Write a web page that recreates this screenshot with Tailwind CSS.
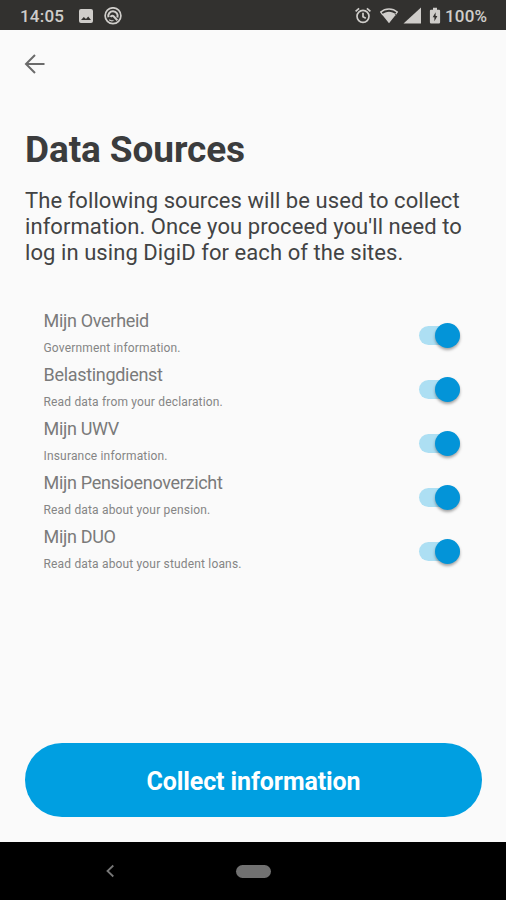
<!DOCTYPE html>
<html lang="en">
<head>
<meta charset="utf-8">
<title>Data Sources</title>
<script src="https://cdn.jsdelivr.net/npm/@tailwindcss/browser@4"></script>
</head>
<body class="bg-[#fafafa] font-[Roboto,sans-serif]">
<div class="flex h-[900px] w-[506px] flex-col overflow-hidden">
  <header class="flex h-[30px] shrink-0 items-center bg-[#32312f] pt-px pr-[18px] pl-[20px] text-[#cfcdca]">
    <span class="w-[58px] text-[17px] leading-[30px] font-medium tracking-[0.2px]">14:05</span>
    <svg class="h-[16px] w-[16px]" viewBox="0 0 16 16"><path fill="currentColor" fill-rule="evenodd" d="M3 1h10a2 2 0 0 1 2 2v10a2 2 0 0 1-2 2H3a2 2 0 0 1-2-2V3a2 2 0 0 1 2-2zM3 12h10l-2.800-3.400-2.200 2.400-2.200-2z"/></svg>
    <svg class="ml-[10px] h-[18px] w-[18px]" viewBox="0 0 18 18" fill="none" stroke="currentColor"><circle cx="9" cy="8.700" r="7.900" stroke-width="1.700"/><path stroke-width="2.100" d="M4.500 10.300A4.700 4.700 0 1 1 13.400 10.500"/><path stroke-width="2" d="M6.600 10c.8-1.600 2.300-1.500 3.200-.5l3.600 3.900"/><path stroke-width="1.300" d="M5.200 12.800c1.200 1 2.800 1.200 4.300.7"/></svg>
    <div class="ml-auto flex items-center">
      <svg class="h-[18px] w-[18px]" viewBox="0 0 18 18" fill="none" stroke="currentColor" stroke-width="1.700"><circle cx="9" cy="9.300" r="6"/><path d="M9 5.800v3.900l2.800 1.500M1.600 4.300l3.500-3M16.400 4.300l-3.500-3"/></svg>
      <svg class="ml-[7px] h-[18px] w-[20px]" viewBox="0 0 20 18"><path fill="none" stroke="currentColor" stroke-width="1.500" d="M1.500 5.200C6.500.9 13.500.9 18.500 5.200"/><path fill="currentColor" d="M3 7.400C7.200 4 12.800 4 17 7.400L10 16.300zM1 5l1.100-.8 2.100 3.200-1 .9zM19 5l-1.100-.8-2.100 3.200 1 .9z"/></svg>
      <svg class="ml-[4px] h-[18px] w-[19px]" viewBox="0 0 19 18"><path fill="currentColor" d="M18 .5v16H.5z"/></svg>
      <svg class="ml-[7px] h-[18px] w-[12px]" viewBox="0 0 12 18"><path fill="currentColor" fill-rule="evenodd" d="M4 .8h4v1.900h2a1.100 1.100 0 0 1 1.100 1.100v11.400A1.300 1.300 0 0 1 9.800 16.500H2.200A1.300 1.300 0 0 1 .9 15.200V3.800A1.100 1.100 0 0 1 2 2.700h2zM6.600 5.200L3.700 10.200h1.700v4l3-5.200H6.600z"/></svg>
      <span class="ml-[4px] w-[43px] text-[17px] leading-[30px] font-medium tracking-[0.200px] whitespace-nowrap">100%</span>
    </div>
  </header>
  <main class="flex grow flex-col px-[25px]">
    <svg class="-ml-[1px] mt-[24px] h-[20px] w-[21px]" viewBox="0 0 21 20" fill="none" stroke="#6b6b6b" stroke-width="2"><path d="M20.500 10H2M11 1L2 10l9 9"/></svg>
    <h1 class="mt-[55px] text-[37px] leading-[42px] font-bold tracking-[-0.100px] text-[#3b3c3d]">Data Sources</h1>
    <p class="mt-[17px] text-[22px] leading-[26px] tracking-[0.070px] whitespace-nowrap text-[#424344]">The following sources will be used to collect<br>information. Once you proceed you'll need to<br>log in using DigiD for each of the sites.</p>
    <ul class="mt-[43px] flex flex-col pr-[21px] pl-[18.500px] text-[#7a7a7a]">
      <li class="flex h-[54.100px] justify-between"><div><h2 class="text-[18px] leading-[24px] tracking-[-0.310px]">Mijn Overheid</h2><p class="mt-[8px] text-[12px] leading-[15px] tracking-[0.170px] text-[#858585]">Government information.</p></div><div class="relative mt-[16.500px] h-[19px] w-[41px] rounded-full bg-[#addff3]"><span class="absolute -top-[3px] right-0 h-[25px] w-[25px] rounded-full bg-[#0394d8] shadow-[0_2px_3px_rgba(0,0,0,0.35)]"></span></div></li>
      <li class="flex h-[54.100px] justify-between"><div><h2 class="text-[18px] leading-[24px] tracking-[-0.310px]">Belastingdienst</h2><p class="mt-[8px] text-[12px] leading-[15px] tracking-[0.170px] text-[#858585]">Read data from your declaration.</p></div><div class="relative mt-[16.500px] h-[19px] w-[41px] rounded-full bg-[#addff3]"><span class="absolute -top-[3px] right-0 h-[25px] w-[25px] rounded-full bg-[#0394d8] shadow-[0_2px_3px_rgba(0,0,0,0.35)]"></span></div></li>
      <li class="flex h-[54.100px] justify-between"><div><h2 class="text-[18px] leading-[24px] tracking-[-0.310px]">Mijn UWV</h2><p class="mt-[8px] text-[12px] leading-[15px] tracking-[0.170px] text-[#858585]">Insurance information.</p></div><div class="relative mt-[16.500px] h-[19px] w-[41px] rounded-full bg-[#addff3]"><span class="absolute -top-[3px] right-0 h-[25px] w-[25px] rounded-full bg-[#0394d8] shadow-[0_2px_3px_rgba(0,0,0,0.35)]"></span></div></li>
      <li class="flex h-[54.100px] justify-between"><div><h2 class="text-[18px] leading-[24px] tracking-[-0.310px]">Mijn Pensioenoverzicht</h2><p class="mt-[8px] text-[12px] leading-[15px] tracking-[0.170px] text-[#858585]">Read data about your pension.</p></div><div class="relative mt-[16.500px] h-[19px] w-[41px] rounded-full bg-[#addff3]"><span class="absolute -top-[3px] right-0 h-[25px] w-[25px] rounded-full bg-[#0394d8] shadow-[0_2px_3px_rgba(0,0,0,0.35)]"></span></div></li>
      <li class="flex h-[54.100px] justify-between"><div><h2 class="text-[18px] leading-[24px] tracking-[-0.310px]">Mijn DUO</h2><p class="mt-[8px] text-[12px] leading-[15px] tracking-[0.170px] text-[#858585]">Read data about your student loans.</p></div><div class="relative mt-[16.500px] h-[19px] w-[41px] rounded-full bg-[#addff3]"><span class="absolute -top-[3px] right-0 h-[25px] w-[25px] rounded-full bg-[#0394d8] shadow-[0_2px_3px_rgba(0,0,0,0.35)]"></span></div></li>
    </ul>
    <button class="mt-auto mr-[-1px] mb-[25px] h-[74px] shrink-0 rounded-full bg-[#009fe1] pt-[3px] text-[25px] font-bold tracking-[-0.100px] text-white">Collect information</button>
  </main>
  <footer class="flex h-[58px] shrink-0 items-center bg-black">
    <svg class="ml-[104.500px] h-[14px] w-[10px]" viewBox="0 0 10 14" fill="none" stroke="#777" stroke-width="1.800"><path d="M8.300 1.500L2.500 7l5.800 5.500"/></svg>
    <span class="ml-[121.500px] h-[13px] w-[35px] rounded-full bg-[#717171]"></span>
  </footer>
</div>
</body>
</html>
